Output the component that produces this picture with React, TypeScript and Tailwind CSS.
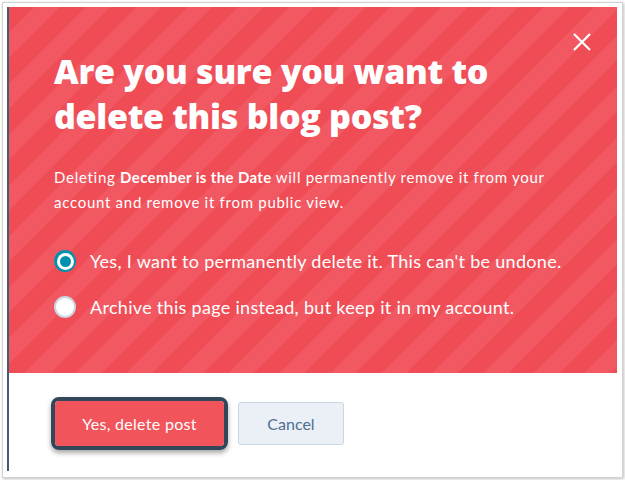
import React from "react";

function Radio({ checked }: { checked: boolean }) {
  if (checked) {
    return (
      <span className="flex h-[22px] w-[22px] shrink-0 items-center justify-center rounded-full bg-[#0091ae]">
        <span className="flex h-[17px] w-[17px] items-center justify-center rounded-full bg-white">
          <span className="h-[11px] w-[11px] rounded-full bg-[#0091ae]" />
        </span>
      </span>
    );
  }
  return (
    <span className="h-[22px] w-[22px] shrink-0 rounded-full border-2 border-[#cbd6e2] bg-white" />
  );
}

export default function App() {
  const stripes =
    "bg-[repeating-linear-gradient(135deg,#f04c55_0px,#f04c55_18px,#f15862_18px,#f15862_36px)]";
  return (
    <div
      className="h-[480px] w-[625px] overflow-hidden bg-white pl-[2px] pt-[2px]"
      style={{ fontFamily: "Lato, 'Noto Sans', sans-serif" }}
    >
      <div className="h-[476px] w-[621px] border border-[#d2d2d2] bg-white pl-[4px] pt-[4px] shadow-[1px_1px_3px_rgba(0,0,0,0.25)]">
        <div className="h-[464px] w-[610px] border-l-2 border-[#425b76] bg-white">
          <div className={`relative h-[366px] w-[608px] px-[45px] pt-[42px] ${stripes}`}>
            <button className="absolute right-[26px] top-[26px] text-white" aria-label="Close">
              <svg width="18" height="18" viewBox="0 0 18 18" fill="none">
                <path d="M1 1L17 17M17 1L1 17" stroke="white" strokeWidth="2.2" />
              </svg>
            </button>
            <h1
              className="text-[34px] font-extrabold leading-[45px] tracking-[-0.3px] text-white"
              style={{ fontFamily: "'Open Sans', Lato, sans-serif" }}
            >
              Are you sure you want to
              <br />
              delete this blog post?
            </h1>
            <p className="mt-[26px] text-[15px] leading-[25px] tracking-[0.72px] text-white">
              Deleting <span className="font-bold tracking-[0.35px]">December is the Date</span> will permanently remove it from your
              <br />
              account and remove it from public view.
            </p>
            <div className="mt-[35px] flex flex-col gap-[24px]">
              <label className="flex items-center gap-[14px] text-[18px] leading-[22px] tracking-[0.3px] text-white">
                <Radio checked />
                <span>Yes, I want to permanently delete it. This can't be undone.</span>
              </label>
              <label className="flex items-center gap-[14px] text-[18px] leading-[22px] tracking-[0.3px] text-white">
                <Radio checked={false} />
                <span>Archive this page instead, but keep it in my account.</span>
              </label>
            </div>
          </div>
          <div className="flex items-center gap-[10px] pl-[42px] pt-[24px]">
            <div className="rounded-[8px] border-[4px] border-[#33475b] shadow-[0_3px_5px_rgba(0,0,0,0.35)]">
              <button className="flex h-[45px] w-[169px] items-center justify-center rounded-[4px] bg-[#f2545b] text-[16px] tracking-[0.3px] text-white">
                Yes, delete post
              </button>
            </div>
            <button className="flex h-[43px] w-[106px] items-center justify-center rounded-[3px] border border-[#cbd6e2] bg-[#eaf0f6] text-[16px] text-[#506e91]">
              Cancel
            </button>
          </div>
        </div>
      </div>
    </div>
  );
}
